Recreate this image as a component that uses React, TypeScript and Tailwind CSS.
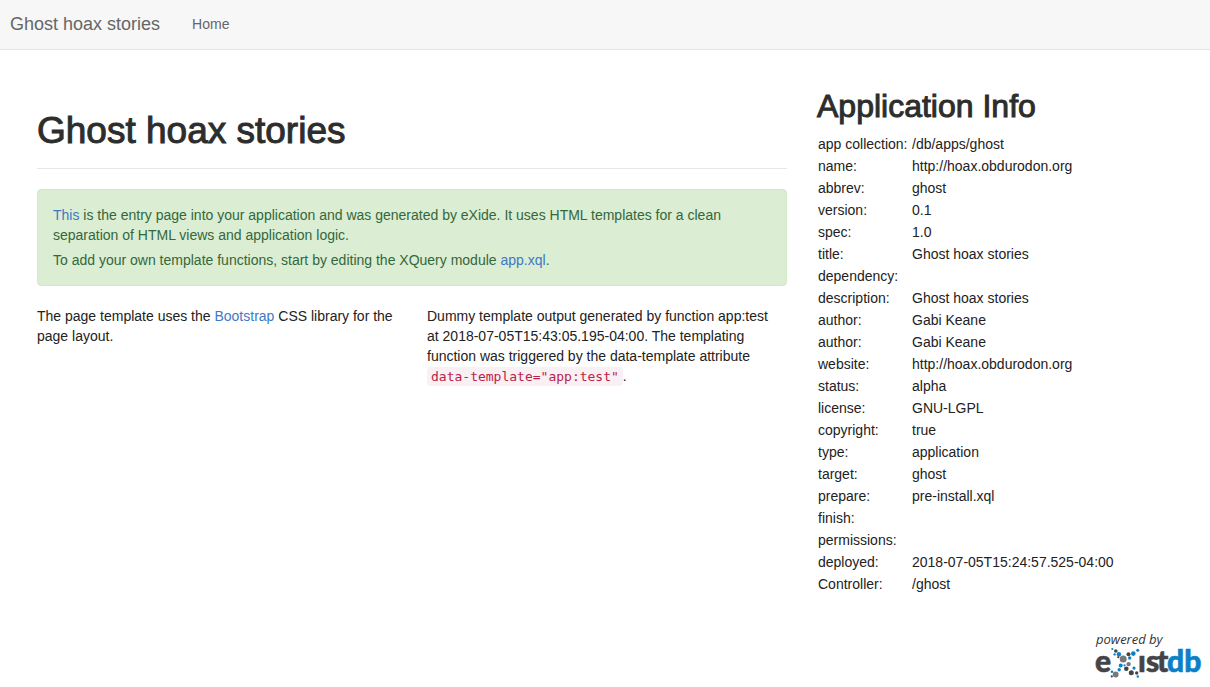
const appInfo: [string, string][] = [
  ['app collection:', '/db/apps/ghost'],
  ['name:', 'http://hoax.obdurodon.org'],
  ['abbrev:', 'ghost'],
  ['version:', '0.1'],
  ['spec:', '1.0'],
  ['title:', 'Ghost hoax stories'],
  ['dependency:', ''],
  ['description:', 'Ghost hoax stories'],
  ['author:', 'Gabi Keane'],
  ['author:', 'Gabi Keane'],
  ['website:', 'http://hoax.obdurodon.org'],
  ['status:', 'alpha'],
  ['license:', 'GNU-LGPL'],
  ['copyright:', 'true'],
  ['type:', 'application'],
  ['target:', 'ghost'],
  ['prepare:', 'pre-install.xql'],
  ['finish:', ''],
  ['permissions:', ''],
  ['deployed:', '2018-07-05T15:24:57.525-04:00'],
  ['Controller:', '/ghost'],
];

const BLUE = '#0c80c6';
const DARK = '#444447';
const GREY = '#77787b';

// The dotted "X" of the logo: [cx, cy, r, colour]
const dots: [number, number, number, string][] = [
  [27.3, 24, 1.1, BLUE],
  [30.8, 26, 1.8, DARK],
  [29.6, 29.4, 1.2, BLUE],
  [33.9, 29.2, 2.2, BLUE],
  [33.3, 32.2, 1.1, DARK],
  [38.2, 34, 3.5, GREY],
  [43.5, 29.2, 2, DARK],
  [48.3, 28.6, 2.3, BLUE],
  [52.7, 25.3, 1.5, BLUE],
  [44.7, 33, 1.7, BLUE],
  [35.7, 40.4, 2, BLUE],
  [43.6, 39.1, 2.2, GREY],
  [39.5, 40.3, 1.1, BLUE],
  [34.2, 44.8, 1.7, BLUE],
  [30.7, 49.5, 2.9, GREY],
  [27, 46.8, 1.3, BLUE],
  [26.8, 51.4, 1.1, DARK],
  [41.3, 43.7, 2.3, DARK],
  [46.3, 47.8, 2.5, DARK],
  [49, 43.1, 1.6, BLUE],
  [51.7, 48, 1.7, DARK],
  [52.8, 51.5, 1.2, BLUE],
];

function ExistLogo() {
  return (
    <svg width="125" height="62" viewBox="0 0 125 62" role="img" aria-label="powered by existdb" className="block">
      <text x="11" y="19" fontFamily="'Open Sans', sans-serif" fontStyle="italic" fontSize="13" fill="#333333">
        powered by
      </text>
      <g fontFamily="Lato, sans-serif" fontWeight="900" fontSize="30" strokeWidth="0.6">
        <text x="10" y="47" fill={DARK} stroke={DARK}>e</text>
        <text x="53 61 72" y="47" fill={DARK} stroke={DARK}>ıst</text>
        <text x="82" y="47" fill={BLUE} stroke={BLUE}>db</text>
      </g>
      {dots.map(([cx, cy, r, fill], i) => (
        <circle key={i} cx={cx} cy={cy} r={r} fill={fill} />
      ))}
    </svg>
  );
}

const link = 'text-[#3f78c3] hover:underline';

export default function App() {
  return (
    <div className="bg-white font-['Liberation_Sans',Arial,sans-serif] text-sm leading-5 text-[#222222]">
      <nav className="flex h-[50px] items-center gap-8 border-b border-[#e4e4e4] bg-[#f7f7f7] px-[10px] pb-px text-[#666666]">
        <a href="#" className="text-lg leading-5">Ghost hoax stories</a>
        <a href="#">Home</a>
      </nav>

      <main className="grid grid-cols-3 gap-[30px] pt-10 pr-[33px] pl-[37px]">
        <div className="col-span-2 pt-[21px]">
          <header className="mb-5 border-b border-[#e8e8e8] pb-[17px]">
            <h1 className="text-[37px] leading-10 text-[#2d2d2d] [-webkit-text-stroke:1px_#2d2d2d]">Ghost hoax stories</h1>
          </header>

          <div className="mb-5 rounded border border-[#d0e9c6] bg-[#dbedd3] p-[15px] text-[#33683a]">
            <p>
              <a href="#" className={link}>This</a> is the entry page into your application and was generated by eXide. It
              uses HTML templates for a clean separation of HTML views and application logic.
            </p>
            <p className="mt-[5px]">
              To add your own template functions, start by editing the XQuery module{' '}
              <a href="#" className={link}>app.xql</a>.
            </p>
          </div>

          <div className="grid grid-cols-2 gap-[30px]">
            <p>
              The page template uses the <a href="#" className={link}>Bootstrap</a> CSS library for the page layout.
            </p>
            <p className="pr-[10px]">
              Dummy template output generated by function app:test at 2018-07-05T15:43:05.195-04:00. The templating
              function was triggered by the data-template attribute{' '}
              <code className="rounded bg-[#f8f0f2] px-1 py-0.5 font-['DejaVu_Sans_Mono',monospace] text-[13px] whitespace-nowrap text-[#bd2149]">
                data-template="app:test"
              </code>
              .
            </p>
          </div>
        </div>

        <aside>
          <h2 className="mb-[10px] text-[32px] leading-[33px] text-[#2d2d2d] [-webkit-text-stroke:1px_#2d2d2d]">Application Info</h2>
          <table>
            <tbody>
              {appInfo.map(([name, value], i) => (
                <tr key={i}>
                  <th scope="row" className="w-[95px] py-px pl-px text-left font-normal whitespace-nowrap">{name}</th>
                  <td className="py-px">{value}</td>
                </tr>
              ))}
            </tbody>
          </table>
        </aside>
      </main>

      <footer className="mt-[30px] flex justify-end">
        <a href="#"><ExistLogo /></a>
      </footer>
    </div>
  );
}
